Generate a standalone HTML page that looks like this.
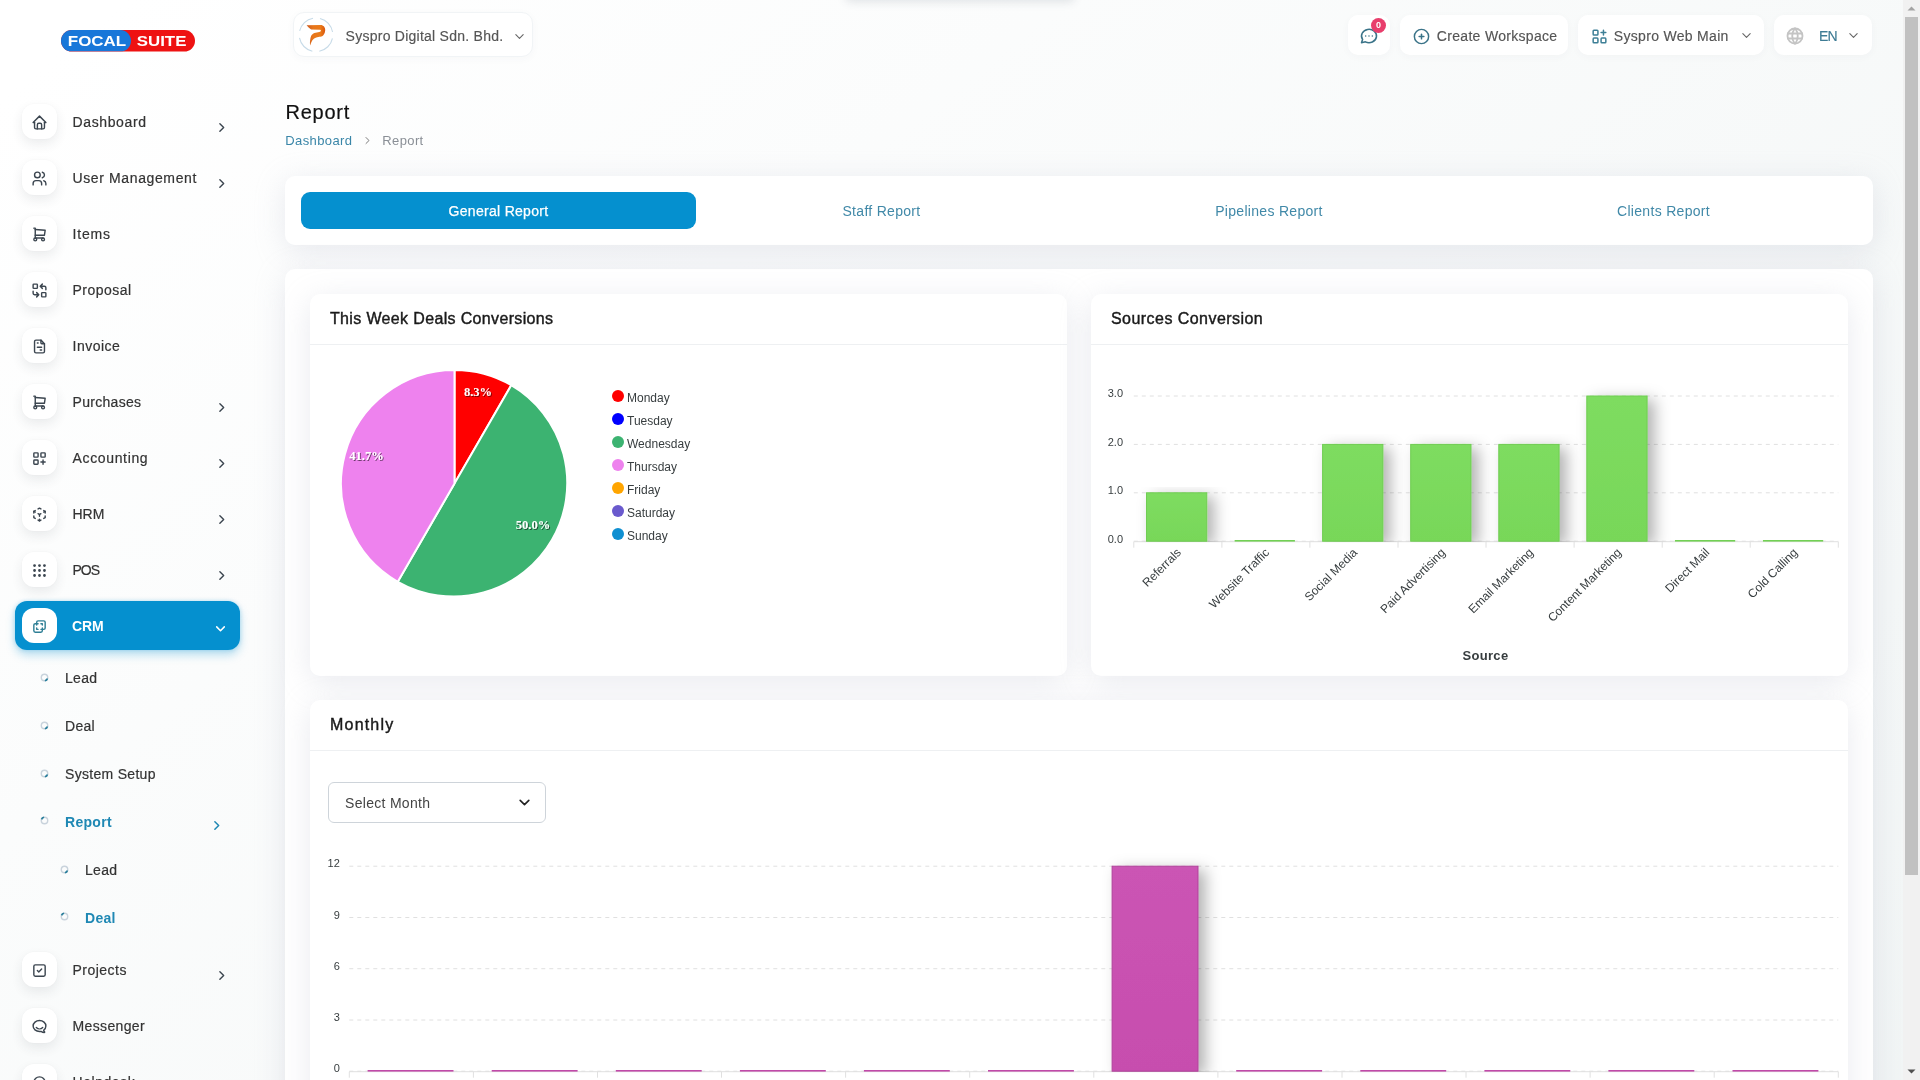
<!DOCTYPE html>
<html lang="en">
<head>
<meta charset="utf-8">
<title>Report</title>
<style>
*{box-sizing:border-box;margin:0;padding:0}
html,body{width:1920px;height:1080px;overflow:hidden}
body{position:relative;font-family:"Liberation Sans",sans-serif;font-size:14px;color:#333;background:#fff}
#bg{position:absolute;left:0;top:0;width:1920px;height:1315px;background:linear-gradient(141.55deg,#fff 3.46%,#f0f4f4 99.86%)}
#w{position:absolute;left:0;top:0;width:1920px;height:1080px;will-change:transform}
.abs{position:absolute}
svg{display:block;overflow:visible}
.ico{fill:none;stroke:#3c4650;stroke-width:2;stroke-linecap:round;stroke-linejoin:round}
/* sidebar */
.nav{position:absolute;left:15px;width:225px;height:49px}
.nav .ib{position:absolute;left:7px;top:7.4px;width:35px;height:35px;border-radius:12px;background:#fff;
 box-shadow:0 5px 12px rgba(40,50,70,.09),0 0 3px rgba(40,50,70,.04)}
.nav .ib svg{position:absolute;left:9px;top:9.7px;width:17px;height:17px}
.nav .t{position:absolute;left:57.5px;top:15px;font-size:14px;line-height:20px;color:#333;letter-spacing:.62px;white-space:nowrap;-webkit-text-stroke:.2px #333}
.nav .ch{position:absolute;left:200px;top:23.7px;width:13px;height:13px}
.nav.act{background:#0590cf;border-radius:12px;box-shadow:0 5px 10px rgba(5,144,207,.28),0 0 4px rgba(5,144,207,.25)}
.nav.act .t{-webkit-text-stroke:0;color:#fff;font-weight:bold;letter-spacing:-.1px;left:57px}
.nav.act .ch{left:199px;top:21.3px}
.nav.act .ib{box-shadow:none}
.sub{position:absolute;font-size:14px;line-height:20px;color:#333;letter-spacing:.3px;white-space:nowrap;-webkit-text-stroke:.2px #333}
.sub.on{-webkit-text-stroke:0;color:#1f88b4;font-weight:bold;letter-spacing:.3px}
.dot{position:absolute;width:9px;height:9px}
/* header */
.hbtn{position:absolute;top:15px;height:40px;background:#fff;border-radius:10px;box-shadow:0 2px 8px rgba(60,70,90,.03)}
.hbtn .t{position:absolute;top:11px;font-size:14px;line-height:20px;color:#555;white-space:nowrap;letter-spacing:.31px;-webkit-text-stroke:.15px #555}
/* cards */
.card{position:absolute;background:#fff;border-radius:10px;box-shadow:0 6px 30px rgba(182,186,203,.3)}
.card2{position:absolute;background:#fff;border-radius:10px;box-shadow:0 6px 30px rgba(182,186,203,.3)}
.ctitle{position:absolute;left:20px;top:13px;font-size:16px;line-height:24px;color:#1a1a1a;white-space:nowrap;letter-spacing:.35px;-webkit-text-stroke:.42px #1a1a1a}
.chead{position:absolute;left:0;right:0;top:50px;height:1px;background:#eef0f2}
.tab{position:absolute;top:16.7px;height:37px;line-height:37px;text-align:center;font-size:14px;color:#4189a8;letter-spacing:.3px;white-space:nowrap}
.tab.on{top:16px;line-height:38.4px;background:#0590cf;color:#fff;border-radius:9px;-webkit-text-stroke:.25px #fff}
.ax{font-family:"Liberation Sans",sans-serif;font-size:11px;fill:#373d3f}
.ax12{font-family:"Liberation Sans",sans-serif;font-size:12px;fill:#373d3f}
</style>
</head>
<body>
<div id="bg"></div>
<div id="w">
<svg class="abs" style="left:61px;top:30px" width="134" height="22" viewBox="0 0 134 22">
<defs><clipPath id="lp"><rect x="0" y="0" width="134" height="21.6" rx="10.8"/></clipPath></defs>
<g clip-path="url(#lp)"><rect x="0" y="0" width="134" height="22" fill="#ee1212"/><rect x="-12" y="0" width="82" height="21.6" rx="10.8" fill="#1877d9"/></g>
<text x="6.8" y="16.4" font-family="Liberation Sans, sans-serif" font-weight="bold" font-size="15.3" fill="#fff" textLength="58.4" lengthAdjust="spacingAndGlyphs">FOCAL</text>
<text x="75.8" y="16.4" font-family="Liberation Sans, sans-serif" font-weight="bold" font-size="15.3" fill="#fff" textLength="49.6" lengthAdjust="spacingAndGlyphs">SUITE</text>
</svg>
<div class="nav" style="top:97px"><div class="ib"><svg viewBox="0 0 24 24"><g class="ico" ><polyline points="5 12 3 12 12 3 21 12 19 12"/><path d="M5 12v7a2 2 0 0 0 2 2h10a2 2 0 0 0 2 -2v-7"/><path d="M9 21v-6a2 2 0 0 1 2 -2h2a2 2 0 0 1 2 2v6"/></g></svg></div><div class="t" style="letter-spacing:0.62px">Dashboard</div><svg class="ch" viewBox="0 0 24 24"><polyline class="ico" style="stroke-width:2.6" points="9 5 16 12 9 19"/></svg></div>
<div class="nav" style="top:153px"><div class="ib"><svg viewBox="0 0 24 24"><g class="ico" ><circle cx="9" cy="7" r="4"/><path d="M3 21v-2a4 4 0 0 1 4 -4h4a4 4 0 0 1 4 4v2"/><path d="M16 3.13a4 4 0 0 1 0 7.75"/><path d="M21 21v-2a4 4 0 0 0 -3 -3.85"/></g></svg></div><div class="t" style="letter-spacing:0.62px">User Management</div><svg class="ch" viewBox="0 0 24 24"><polyline class="ico" style="stroke-width:2.6" points="9 5 16 12 9 19"/></svg></div>
<div class="nav" style="top:209px"><div class="ib"><svg viewBox="0 0 24 24"><g class="ico" ><circle cx="6" cy="19" r="2"/><circle cx="17" cy="19" r="2"/><path d="M17 17h-11v-14h-2"/><path d="M6 5l14 1l-1 7h-13"/></g></svg></div><div class="t" style="letter-spacing:0.8px">Items</div></div>
<div class="nav" style="top:265px"><div class="ib"><svg viewBox="0 0 24 24"><g class="ico" ><rect x="3" y="3" width="6" height="6" rx="1"/><rect x="15" y="15" width="6" height="6" rx="1"/><path d="M21 11v-3a2 2 0 0 0 -2 -2h-6l3 3m0 -6l-3 3"/><path d="M3 13v3a2 2 0 0 0 2 2h6l-3 -3m0 6l3 -3"/></g></svg></div><div class="t" style="letter-spacing:0.48px">Proposal</div></div>
<div class="nav" style="top:321px"><div class="ib"><svg viewBox="0 0 24 24"><g class="ico" ><path d="M14 3v4a1 1 0 0 0 1 1h4"/><path d="M17 21h-10a2 2 0 0 1 -2 -2v-14a2 2 0 0 1 2 -2h7l5 5v11a2 2 0 0 1 -2 2z"/><line x1="9" y1="7" x2="10" y2="7"/><line x1="9" y1="13" x2="15" y2="13"/><line x1="13" y1="17" x2="15" y2="17"/></g></svg></div><div class="t" style="letter-spacing:0.5px">Invoice</div></div>
<div class="nav" style="top:377px"><div class="ib"><svg viewBox="0 0 24 24"><g class="ico" ><circle cx="6" cy="19" r="2"/><circle cx="17" cy="19" r="2"/><path d="M17 17h-11v-14h-2"/><path d="M6 5l14 1l-1 7h-13"/></g></svg></div><div class="t" style="letter-spacing:0.3px">Purchases</div><svg class="ch" viewBox="0 0 24 24"><polyline class="ico" style="stroke-width:2.6" points="9 5 16 12 9 19"/></svg></div>
<div class="nav" style="top:433px"><div class="ib"><svg viewBox="0 0 24 24"><g class="ico" ><rect x="4" y="4" width="6" height="6" rx="1"/><rect x="14" y="4" width="6" height="6" rx="1"/><rect x="4" y="14" width="6" height="6" rx="1"/><path d="M14 17h6m-3 -3v6"/></g></svg></div><div class="t" style="letter-spacing:0.65px">Accounting</div><svg class="ch" viewBox="0 0 24 24"><polyline class="ico" style="stroke-width:2.6" points="9 5 16 12 9 19"/></svg></div>
<div class="nav" style="top:489px"><div class="ib"><svg viewBox="0 0 24 24"><g class="ico" ><path d="M6 17.6l-2 -1.1v-2.5"/><path d="M4 10v-2.5l2 -1.1"/><path d="M10 4.1l2 -1.1l2 1.1"/><path d="M18 6.4l2 1.1v2.5"/><path d="M20 14v2.5l-2 1.12"/><path d="M14 19.9l-2 1.1l-2 -1.1"/><line x1="12" y1="12" x2="14" y2="10.9"/><line x1="18" y1="8.6" x2="20" y2="7.5"/><line x1="12" y1="12" x2="12" y2="14.5"/><line x1="12" y1="18.5" x2="12" y2="21"/><path d="M12 12l-2 -1.12"/><line x1="6" y1="8.6" x2="4" y2="7.5"/></g></svg></div><div class="t" style="letter-spacing:0px">HRM</div><svg class="ch" viewBox="0 0 24 24"><polyline class="ico" style="stroke-width:2.6" points="9 5 16 12 9 19"/></svg></div>
<div class="nav" style="top:545px"><div class="ib"><svg viewBox="0 0 24 24"><g class="ico" ><circle cx="5" cy="5" r="1"/><circle cx="12" cy="5" r="1"/><circle cx="19" cy="5" r="1"/><circle cx="5" cy="12" r="1"/><circle cx="12" cy="12" r="1"/><circle cx="19" cy="12" r="1"/><circle cx="5" cy="19" r="1"/><circle cx="12" cy="19" r="1"/><circle cx="19" cy="19" r="1"/></g></svg></div><div class="t" style="letter-spacing:-1.0px">POS</div><svg class="ch" viewBox="0 0 24 24"><polyline class="ico" style="stroke-width:2.6" points="9 5 16 12 9 19"/></svg></div>
<div class="nav act" style="top:601px"><div class="ib"><svg viewBox="0 0 24 24"><g class="ico" style="stroke:#2f7f95"><path d="M16 16v2a2 2 0 0 1 -2 2h-8a2 2 0 0 1 -2 -2v-8a2 2 0 0 1 2 -2h2v-2a2 2 0 0 1 2 -2h8a2 2 0 0 1 2 2v8a2 2 0 0 1 -2 2h-2"/><polyline points="10 8 8 8 8 10"/><polyline points="8 14 8 16 10 16"/><polyline points="14 8 16 8 16 10"/><polyline points="16 14 16 16 14 16"/></g></svg></div><div class="t" style="letter-spacing:-0.1px">CRM</div><svg class="ch" viewBox="0 0 24 24"><polyline class="ico" style="stroke-width:2.8;stroke:#fff" points="5 9 12 16 19 9"/></svg></div>
<svg class="dot" style="left:39.5px;top:673px" viewBox="0 0 14 14"><circle cx="7" cy="7" r="5" fill="none" stroke="#c9d3dc" stroke-width="2.2"/><path d="M11.6 8.6A5 5 0 0 1 7.6 12" fill="none" stroke="#2a7f9c" stroke-width="2.6"/></svg>
<div class="sub" style="left:65px;top:667.5px">Lead</div>
<svg class="dot" style="left:39.5px;top:721px" viewBox="0 0 14 14"><circle cx="7" cy="7" r="5" fill="none" stroke="#c9d3dc" stroke-width="2.2"/><path d="M11.6 8.6A5 5 0 0 1 7.6 12" fill="none" stroke="#2a7f9c" stroke-width="2.6"/></svg>
<div class="sub" style="left:65px;top:715.5px">Deal</div>
<svg class="dot" style="left:39.5px;top:769px" viewBox="0 0 14 14"><circle cx="7" cy="7" r="5" fill="none" stroke="#c9d3dc" stroke-width="2.2"/><path d="M11.6 8.6A5 5 0 0 1 7.6 12" fill="none" stroke="#2a7f9c" stroke-width="2.6"/></svg>
<div class="sub" style="left:65px;top:763.5px">System Setup</div>
<svg class="dot" style="left:39.5px;top:816px" viewBox="0 0 14 14"><circle cx="7" cy="7" r="5" fill="none" stroke="#c9d3dc" stroke-width="2.2"/><path d="M2.4 5.2A5 5 0 0 1 6.4 2" fill="none" stroke="#2a7f9c" stroke-width="2.6"/></svg>
<div class="sub on" style="left:65px;top:811.5px">Report</div>
<svg class="dot" style="left:59.5px;top:865px" viewBox="0 0 14 14"><circle cx="7" cy="7" r="5" fill="none" stroke="#c9d3dc" stroke-width="2.2"/><path d="M11.6 8.6A5 5 0 0 1 7.6 12" fill="none" stroke="#2a7f9c" stroke-width="2.6"/></svg>
<div class="sub" style="left:85px;top:859.5px">Lead</div>
<svg class="dot" style="left:59.5px;top:912px" viewBox="0 0 14 14"><circle cx="7" cy="7" r="5" fill="none" stroke="#c9d3dc" stroke-width="2.2"/><path d="M2.4 5.2A5 5 0 0 1 6.4 2" fill="none" stroke="#2a7f9c" stroke-width="2.6"/></svg>
<div class="sub on" style="left:85px;top:907.5px">Deal</div>
<svg class="abs" style="left:210.2px;top:818.7px;width:13px;height:13px" viewBox="0 0 24 24"><polyline class="ico" style="stroke-width:2.8;stroke:#1f88b4" points="9 5 16 12 9 19"/></svg>
<div class="nav" style="top:945px"><div class="ib"><svg viewBox="0 0 24 24"><g class="ico"><rect x="4" y="4" width="16" height="16" rx="2"/><path d="M9 12l2 2l4 -4"/></g></svg></div><div class="t" style="letter-spacing:0.48px">Projects</div><svg class="ch" viewBox="0 0 24 24"><polyline class="ico" style="stroke-width:2.6" points="9 5 16 12 9 19"/></svg></div>
<div class="nav" style="top:1001px"><div class="ib"><svg viewBox="0 0 24 24"><g class="ico"><path d="M17.802 17.292s.077 -.055 .2 -.149c1.843 -1.425 3 -3.49 3 -5.789c0 -4.286 -4.03 -7.764 -9 -7.764c-4.97 0 -9 3.478 -9 7.764c0 4.288 4.03 7.646 9 7.646c.424 0 1.12 -.028 2.088 -.084c1.262 .82 3.104 1.493 4.716 1.493c.499 0 .734 -.41 .414 -.828c-.486 -.596 -1.156 -1.551 -1.416 -2.29z"/><path d="M7.5 13.5c2.5 2.5 6.5 2.5 9 0"/></g></svg></div><div class="t" style="letter-spacing:0.36px">Messenger</div></div>
<div class="nav" style="top:1057px"><div class="ib"><svg viewBox="0 0 24 24"><g class="ico"><rect x="4" y="13" rx="2" width="4" height="6"/><rect x="16" y="13" rx="2" width="4" height="6"/><path d="M4 15v-3a8 8 0 0 1 16 0v3"/><path d="M18 19a6 3 0 0 1 -6 3"/></g></svg></div><div class="t" style="letter-spacing:0.55px">Helpdesk</div></div>
<div class="abs" style="left:845px;top:-12px;width:230px;height:12px;border-radius:6px;box-shadow:0 2px 10px rgba(60,70,90,.14)"></div>
<div class="hbtn" style="left:293px;top:12px;width:240px;height:45px;border:1px solid #f1f4f6;border-radius:11px">
 <svg class="abs" style="left:4px;top:4.4px" width="36" height="36" viewBox="0 0 36 36">
  <circle cx="18" cy="17.8" r="16.8" fill="#fff" stroke="#c7dbe8" stroke-width="1.1" stroke-dasharray="19.4 6.99" transform="rotate(12 18 17.8)"/>
  <defs><linearGradient id="pg" x1="0" y1="0" x2="1" y2="0"><stop offset="0" stop-color="#c9581f"/><stop offset=".35" stop-color="#e8761a"/><stop offset=".75" stop-color="#ea7a18"/><stop offset="1" stop-color="#d9560f"/></linearGradient></defs>
  <path d="M8.6 8.2 L22.5 8 C25.5 8 27.4 10.5 27.2 13.3 C27 16.5 25.5 18.5 24.5 19 C23 19.7 21.5 19.7 20.4 19.9 C18.5 20.3 16.8 21 15.6 21.9 C13.8 23.5 12.8 26 12.3 28.6 C11.8 27 11.9 25 12.1 23.5 C12.3 21.8 12.6 20.2 13.1 19 C13.8 17.6 15 16.7 16.4 16.1 C18 15.5 19.8 15.3 21.3 14.9 C22.3 14.6 22.9 14.2 22.9 13.7 C22.9 13.1 22.6 12.7 22.1 12.7 L13.1 12.5 C11.3 11.3 9.8 9.8 8.6 8.2 Z" fill="url(#pg)"/>
 </svg>
 <div class="t" style="left:51.6px;top:13px;letter-spacing:.25px">Syspro Digital Sdn. Bhd.</div>
 <svg class="abs" style="left:220px;top:17.5px" width="11" height="11" viewBox="0 0 24 24"><polyline class="ico" style="stroke:#666;stroke-width:2.4" points="4 8 12 16 20 8"/></svg>
</div>
<div class="hbtn" style="left:1348px;width:42px">
 <svg class="abs" style="left:11px;top:11px" width="20" height="20" viewBox="0 0 24 24"><g class="ico" style="stroke:#3a7388;stroke-width:1.85"><path d="M3 20l1.3 -3.9a9 8 0 1 1 3.4 2.9l-4.7 1"/><line x1="12" y1="12" x2="12" y2="12.01"/><line x1="8" y1="12" x2="8" y2="12.01"/><line x1="16" y1="12" x2="16" y2="12.01"/></g></svg>
 <div class="abs" style="left:23px;top:2.5px;width:15px;height:15px;border-radius:50%;background:#e83e6c;color:#fff;font-size:9px;line-height:15px;text-align:center;font-weight:bold">0</div>
</div>
<div class="hbtn" style="left:1400px;width:168px">
 <svg class="abs" style="left:12px;top:11.5px" width="19" height="19" viewBox="0 0 24 24"><g class="ico" style="stroke:#3a7388;stroke-width:1.85"><circle cx="12" cy="12" r="9"/><line x1="9" y1="12" x2="15" y2="12"/><line x1="12" y1="9" x2="12" y2="15"/></g></svg>
 <div class="t" style="left:36.8px">Create Workspace</div>
</div>
<div class="hbtn" style="left:1578px;width:186px">
 <svg class="abs" style="left:12px;top:11.5px" width="19" height="19" viewBox="0 0 24 24"><g class="ico" style="stroke:#3d7f96;stroke-width:1.9"><rect x="4" y="4" width="6" height="6" rx="1"/><rect x="14" y="14" width="6" height="6" rx="1"/><rect x="4" y="14" width="6" height="6" rx="1"/><path d="M14 7h6m-3 -3v6"/></g></svg>
 <div class="t" style="left:35.8px">Syspro Web Main</div>
 <svg class="abs" style="left:163px;top:15px" width="11" height="11" viewBox="0 0 24 24"><polyline class="ico" style="stroke:#666;stroke-width:2.4" points="4 8 12 16 20 8"/></svg>
</div>
<div class="hbtn" style="left:1774px;width:98px">
 <svg class="abs" style="left:11px;top:11px" width="20" height="20" viewBox="0 0 24 24"><g class="ico" style="stroke:#c4c4c4;stroke-width:2.2"><circle cx="12" cy="12" r="9"/><line x1="3.6" y1="9" x2="20.4" y2="9"/><line x1="3.6" y1="15" x2="20.4" y2="15"/><path d="M11.5 3a17 17 0 0 0 0 18"/><path d="M12.5 3a17 17 0 0 1 0 18"/></g></svg>
 <div class="t" style="left:45px;color:#3d7b94;letter-spacing:-.9px;-webkit-text-stroke:.15px #3d7b94">EN</div>
 <svg class="abs" style="left:74px;top:15px" width="11" height="11" viewBox="0 0 24 24"><polyline class="ico" style="stroke:#666;stroke-width:2.4" points="4 8 12 16 20 8"/></svg>
</div>
<div class="abs" style="left:285.5px;top:99.3px;font-size:20px;line-height:26px;color:#111;letter-spacing:.75px;-webkit-text-stroke:.2px #111;white-space:nowrap">Report</div>
<div class="abs" style="left:285.3px;top:132px;font-size:13px;line-height:18px;color:#3a86a8;letter-spacing:.38px;white-space:nowrap">Dashboard</div>
<svg class="abs" style="left:362.5px;top:135.5px" width="9" height="9" viewBox="0 0 24 24"><polyline class="ico" style="stroke:#777;stroke-width:2.6" points="8 4 16 12 8 20"/></svg>
<div class="abs" style="left:382.3px;top:132px;font-size:13px;line-height:18px;color:#8a8f96;letter-spacing:.38px;white-space:nowrap">Report</div>

<div class="card" style="left:285px;top:176px;width:1588px;height:69px">
<div class="tab on" style="left:16px;width:395px">General Report</div>
<div class="tab" style="left:496.5px;width:200px">Staff Report</div>
<div class="tab" style="left:884px;width:200px">Pipelines Report</div>
<div class="tab" style="left:1278.5px;width:200px">Clients Report</div>
</div>
<div class="card" style="left:285px;top:269px;width:1588px;height:900px"></div>
<div class="card2" style="left:310px;top:294px;width:757px;height:382px"><div class="ctitle">This Week Deals Conversions</div><div class="chead"></div></div>
<div class="card2" style="left:1091px;top:294px;width:757px;height:382px"><div class="ctitle" style="letter-spacing:.45px">Sources Conversion</div><div class="chead"></div></div>
<div class="card2" style="left:310px;top:700px;width:1538px;height:460px"><div class="ctitle" style="letter-spacing:1.2px">Monthly</div><div class="chead"></div></div>
<svg class="abs" style="left:0;top:0" width="1903" height="1080" viewBox="0 0 1903 1080">
<defs><filter id="ts" x="-30%" y="-30%" width="160%" height="160%"><feDropShadow dx="1" dy="1" stdDeviation=".7" flood-color="#000" flood-opacity=".55"/></filter>
<filter id="bs" x="-40%" y="-10%" width="200%" height="130%"><feDropShadow dx="7" dy="4" stdDeviation="7.5" flood-color="#000" flood-opacity=".3"/></filter>
<linearGradient id="gg" x1="0" y1="0" x2="0" y2="1"><stop offset="0" stop-color="#7edc60"/><stop offset="1" stop-color="#78d759"/></linearGradient>
<linearGradient id="mg" x1="0" y1="0" x2="0" y2="1"><stop offset="0" stop-color="#cb54b4"/><stop offset="1" stop-color="#c74eae"/></linearGradient>
<clipPath id="c1"><rect x="1125" y="360" width="730" height="182"/></clipPath><clipPath id="c2"><rect x="340" y="840" width="1520" height="232"/></clipPath></defs>
<path d="M454.5 483.5L454.50 370.00A113.5 113.5 0 0 1 511.25 385.21Z" fill="#ff0000" stroke="#fff" stroke-width="2" stroke-linejoin="round"/>
<path d="M454.5 483.5L511.25 385.21A113.5 113.5 0 0 1 397.75 581.79Z" fill="#3cb371" stroke="#fff" stroke-width="2" stroke-linejoin="round"/>
<path d="M454.5 483.5L397.75 581.79A113.5 113.5 0 0 1 454.50 370.00Z" fill="#ee82ee" stroke="#fff" stroke-width="2" stroke-linejoin="round"/>
<text x="478" y="396" text-anchor="middle" font-family="Liberation Serif, serif" font-weight="bold" font-size="12.5" fill="#fff" filter="url(#ts)">8.3%</text>
<text x="533" y="528.5" text-anchor="middle" font-family="Liberation Serif, serif" font-weight="bold" font-size="12.5" fill="#fff" filter="url(#ts)">50.0%</text>
<text x="366.5" y="460" text-anchor="middle" font-family="Liberation Serif, serif" font-weight="bold" font-size="12.5" fill="#fff" filter="url(#ts)">41.7%</text>
<circle cx="618" cy="396.1" r="6" fill="#ff0000"/><text class="ax12" x="627" y="401.7">Monday</text>
<circle cx="618" cy="419.1" r="6" fill="#0000ff"/><text class="ax12" x="627" y="424.7">Tuesday</text>
<circle cx="618" cy="442.1" r="6" fill="#3cb371"/><text class="ax12" x="627" y="447.7">Wednesday</text>
<circle cx="618" cy="465.1" r="6" fill="#ee82ee"/><text class="ax12" x="627" y="470.7">Thursday</text>
<circle cx="618" cy="488.1" r="6" fill="#ffa500"/><text class="ax12" x="627" y="493.7">Friday</text>
<circle cx="618" cy="511.1" r="6" fill="#6a5acd"/><text class="ax12" x="627" y="516.7">Saturday</text>
<circle cx="618" cy="534.1" r="6" fill="#0f8fd1"/><text class="ax12" x="627" y="539.7">Sunday</text>
<line x1="1133.8" x2="1838.3" y1="541.2" y2="541.2" stroke="#e0e0e0" stroke-width="1" stroke-dasharray="4 4"/>
<text class="ax" x="1123" y="542.9" text-anchor="end">0.0</text>
<line x1="1133.8" x2="1838.3" y1="492.8" y2="492.8" stroke="#e0e0e0" stroke-width="1" stroke-dasharray="4 4"/>
<text class="ax" x="1123" y="494.2" text-anchor="end">1.0</text>
<line x1="1133.8" x2="1838.3" y1="444.4" y2="444.4" stroke="#e0e0e0" stroke-width="1" stroke-dasharray="4 4"/>
<text class="ax" x="1123" y="445.5" text-anchor="end">2.0</text>
<line x1="1133.8" x2="1838.3" y1="396.0" y2="396.0" stroke="#e0e0e0" stroke-width="1" stroke-dasharray="4 4"/>
<text class="ax" x="1123" y="396.8" text-anchor="end">3.0</text>
<line x1="1133.8" x2="1838.3" y1="541.7" y2="541.7" stroke="#e0e0e0" stroke-width="1"/>
<line x1="1133.8" x2="1133.8" y1="541.7" y2="547.7" stroke="#e0e0e0" stroke-width="1"/>
<line x1="1221.9" x2="1221.9" y1="541.7" y2="547.7" stroke="#e0e0e0" stroke-width="1"/>
<line x1="1309.9" x2="1309.9" y1="541.7" y2="547.7" stroke="#e0e0e0" stroke-width="1"/>
<line x1="1398.0" x2="1398.0" y1="541.7" y2="547.7" stroke="#e0e0e0" stroke-width="1"/>
<line x1="1486.0" x2="1486.0" y1="541.7" y2="547.7" stroke="#e0e0e0" stroke-width="1"/>
<line x1="1574.1" x2="1574.1" y1="541.7" y2="547.7" stroke="#e0e0e0" stroke-width="1"/>
<line x1="1662.2" x2="1662.2" y1="541.7" y2="547.7" stroke="#e0e0e0" stroke-width="1"/>
<line x1="1750.2" x2="1750.2" y1="541.7" y2="547.7" stroke="#e0e0e0" stroke-width="1"/>
<line x1="1838.3" x2="1838.3" y1="541.7" y2="547.7" stroke="#e0e0e0" stroke-width="1"/>
<rect x="1146.5" y="492.8" width="60.3" height="48.4" fill="url(#gg)" stroke="#6fcd52" stroke-width="1" filter="url(#bs)" clip-path="url(#c1)"/>
<text class="ax12" x="1181.8" y="553.2" text-anchor="end" transform="rotate(-45 1181.8 553.2)">Referrals</text>
<rect x="1234.6" y="540.0" width="60.3" height="1.6" fill="#72d054"/>
<text class="ax12" x="1269.9" y="553.2" text-anchor="end" transform="rotate(-45 1269.9 553.2)">Website Traffic</text>
<rect x="1322.6" y="444.4" width="60.3" height="96.8" fill="url(#gg)" stroke="#6fcd52" stroke-width="1" filter="url(#bs)" clip-path="url(#c1)"/>
<text class="ax12" x="1358.0" y="553.2" text-anchor="end" transform="rotate(-45 1358.0 553.2)">Social Media</text>
<rect x="1410.7" y="444.4" width="60.3" height="96.8" fill="url(#gg)" stroke="#6fcd52" stroke-width="1" filter="url(#bs)" clip-path="url(#c1)"/>
<text class="ax12" x="1446.0" y="553.2" text-anchor="end" transform="rotate(-45 1446.0 553.2)">Paid Advertising</text>
<rect x="1498.8" y="444.4" width="60.3" height="96.8" fill="url(#gg)" stroke="#6fcd52" stroke-width="1" filter="url(#bs)" clip-path="url(#c1)"/>
<text class="ax12" x="1534.1" y="553.2" text-anchor="end" transform="rotate(-45 1534.1 553.2)">Email Marketing</text>
<rect x="1586.8" y="396.0" width="60.3" height="145.2" fill="url(#gg)" stroke="#6fcd52" stroke-width="1" filter="url(#bs)" clip-path="url(#c1)"/>
<text class="ax12" x="1622.1" y="553.2" text-anchor="end" transform="rotate(-45 1622.1 553.2)">Content Marketing</text>
<rect x="1674.9" y="540.0" width="60.3" height="1.6" fill="#72d054"/>
<text class="ax12" x="1710.2" y="553.2" text-anchor="end" transform="rotate(-45 1710.2 553.2)">Direct Mail</text>
<rect x="1762.9" y="540.0" width="60.3" height="1.6" fill="#72d054"/>
<text class="ax12" x="1798.3" y="553.2" text-anchor="end" transform="rotate(-45 1798.3 553.2)">Cold Calling</text>
<text x="1485.5" y="659.5" text-anchor="middle" font-family="Liberation Sans, sans-serif" font-weight="bold" font-size="13" fill="#373d3f" letter-spacing=".3">Source</text>
<line x1="349.3" x2="1838.3" y1="1071.2" y2="1071.2" stroke="#e0e0e0" stroke-width="1" stroke-dasharray="4 4"/>
<text class="ax" x="339.8" y="1072.2" text-anchor="end">0</text>
<line x1="349.3" x2="1838.3" y1="1020.0" y2="1020.0" stroke="#e0e0e0" stroke-width="1" stroke-dasharray="4 4"/>
<text class="ax" x="339.8" y="1021.0" text-anchor="end">3</text>
<line x1="349.3" x2="1838.3" y1="968.7" y2="968.7" stroke="#e0e0e0" stroke-width="1" stroke-dasharray="4 4"/>
<text class="ax" x="339.8" y="969.7" text-anchor="end">6</text>
<line x1="349.3" x2="1838.3" y1="917.5" y2="917.5" stroke="#e0e0e0" stroke-width="1" stroke-dasharray="4 4"/>
<text class="ax" x="339.8" y="918.5" text-anchor="end">9</text>
<line x1="349.3" x2="1838.3" y1="866.2" y2="866.2" stroke="#e0e0e0" stroke-width="1" stroke-dasharray="4 4"/>
<text class="ax" x="339.8" y="867.2" text-anchor="end">12</text>
<line x1="349.3" x2="1838.3" y1="1071.7" y2="1071.7" stroke="#e0e0e0" stroke-width="1"/>
<line x1="349.3" x2="349.3" y1="1071.7" y2="1077.7" stroke="#e0e0e0" stroke-width="1"/>
<line x1="473.4" x2="473.4" y1="1071.7" y2="1077.7" stroke="#e0e0e0" stroke-width="1"/>
<line x1="597.5" x2="597.5" y1="1071.7" y2="1077.7" stroke="#e0e0e0" stroke-width="1"/>
<line x1="721.5" x2="721.5" y1="1071.7" y2="1077.7" stroke="#e0e0e0" stroke-width="1"/>
<line x1="845.6" x2="845.6" y1="1071.7" y2="1077.7" stroke="#e0e0e0" stroke-width="1"/>
<line x1="969.7" x2="969.7" y1="1071.7" y2="1077.7" stroke="#e0e0e0" stroke-width="1"/>
<line x1="1093.8" x2="1093.8" y1="1071.7" y2="1077.7" stroke="#e0e0e0" stroke-width="1"/>
<line x1="1217.9" x2="1217.9" y1="1071.7" y2="1077.7" stroke="#e0e0e0" stroke-width="1"/>
<line x1="1342.0" x2="1342.0" y1="1071.7" y2="1077.7" stroke="#e0e0e0" stroke-width="1"/>
<line x1="1466.0" x2="1466.0" y1="1071.7" y2="1077.7" stroke="#e0e0e0" stroke-width="1"/>
<line x1="1590.1" x2="1590.1" y1="1071.7" y2="1077.7" stroke="#e0e0e0" stroke-width="1"/>
<line x1="1714.2" x2="1714.2" y1="1071.7" y2="1077.7" stroke="#e0e0e0" stroke-width="1"/>
<line x1="1838.3" x2="1838.3" y1="1071.7" y2="1077.7" stroke="#e0e0e0" stroke-width="1"/>
<rect x="367.6" y="1070.0" width="85.9" height="1.6" fill="#c04aa8"/>
<rect x="491.7" y="1070.0" width="85.9" height="1.6" fill="#c04aa8"/>
<rect x="615.8" y="1070.0" width="85.9" height="1.6" fill="#c04aa8"/>
<rect x="739.9" y="1070.0" width="85.9" height="1.6" fill="#c04aa8"/>
<rect x="863.9" y="1070.0" width="85.9" height="1.6" fill="#c04aa8"/>
<rect x="988.0" y="1070.0" width="85.9" height="1.6" fill="#c04aa8"/>
<rect x="1112.1" y="866.2" width="85.9" height="205.0" fill="url(#mg)" stroke="#b0439a" stroke-width="1" filter="url(#bs)" clip-path="url(#c2)"/>
<rect x="1236.2" y="1070.0" width="85.9" height="1.6" fill="#c04aa8"/>
<rect x="1360.3" y="1070.0" width="85.9" height="1.6" fill="#c04aa8"/>
<rect x="1484.4" y="1070.0" width="85.9" height="1.6" fill="#c04aa8"/>
<rect x="1608.4" y="1070.0" width="85.9" height="1.6" fill="#c04aa8"/>
<rect x="1732.5" y="1070.0" width="85.9" height="1.6" fill="#c04aa8"/>
</svg>
<div class="abs" style="left:328px;top:782px;width:218px;height:41px;border:1px solid #ced4da;border-radius:6px;background:#fff"><div class="abs" style="left:16px;top:9.5px;font-size:14px;line-height:20px;color:#444;letter-spacing:.3px;white-space:nowrap">Select Month</div><svg class="abs" style="left:188.6px;top:13px" width="13" height="13" viewBox="0 0 24 24"><polyline class="ico" style="stroke:#222;stroke-width:3" points="4 8 12 16 20 8"/></svg></div>
<div class="abs" style="left:1903px;top:0;width:17px;height:1080px;background:#f1f1f1"></div><div class="abs" style="left:1905px;top:17px;width:13px;height:858px;background:#c1c1c1"></div><svg class="abs" style="left:1903px;top:0" width="17" height="17" viewBox="0 0 17 17"><path d="M4.5 10.5L8.5 6.5L12.5 10.5Z" fill="#a3a3a3"/></svg><svg class="abs" style="left:1903px;top:1063px" width="17" height="17" viewBox="0 0 17 17"><path d="M4.5 6.5L8.5 10.5L12.5 6.5Z" fill="#505050"/></svg>
</div>
</body>
</html>
